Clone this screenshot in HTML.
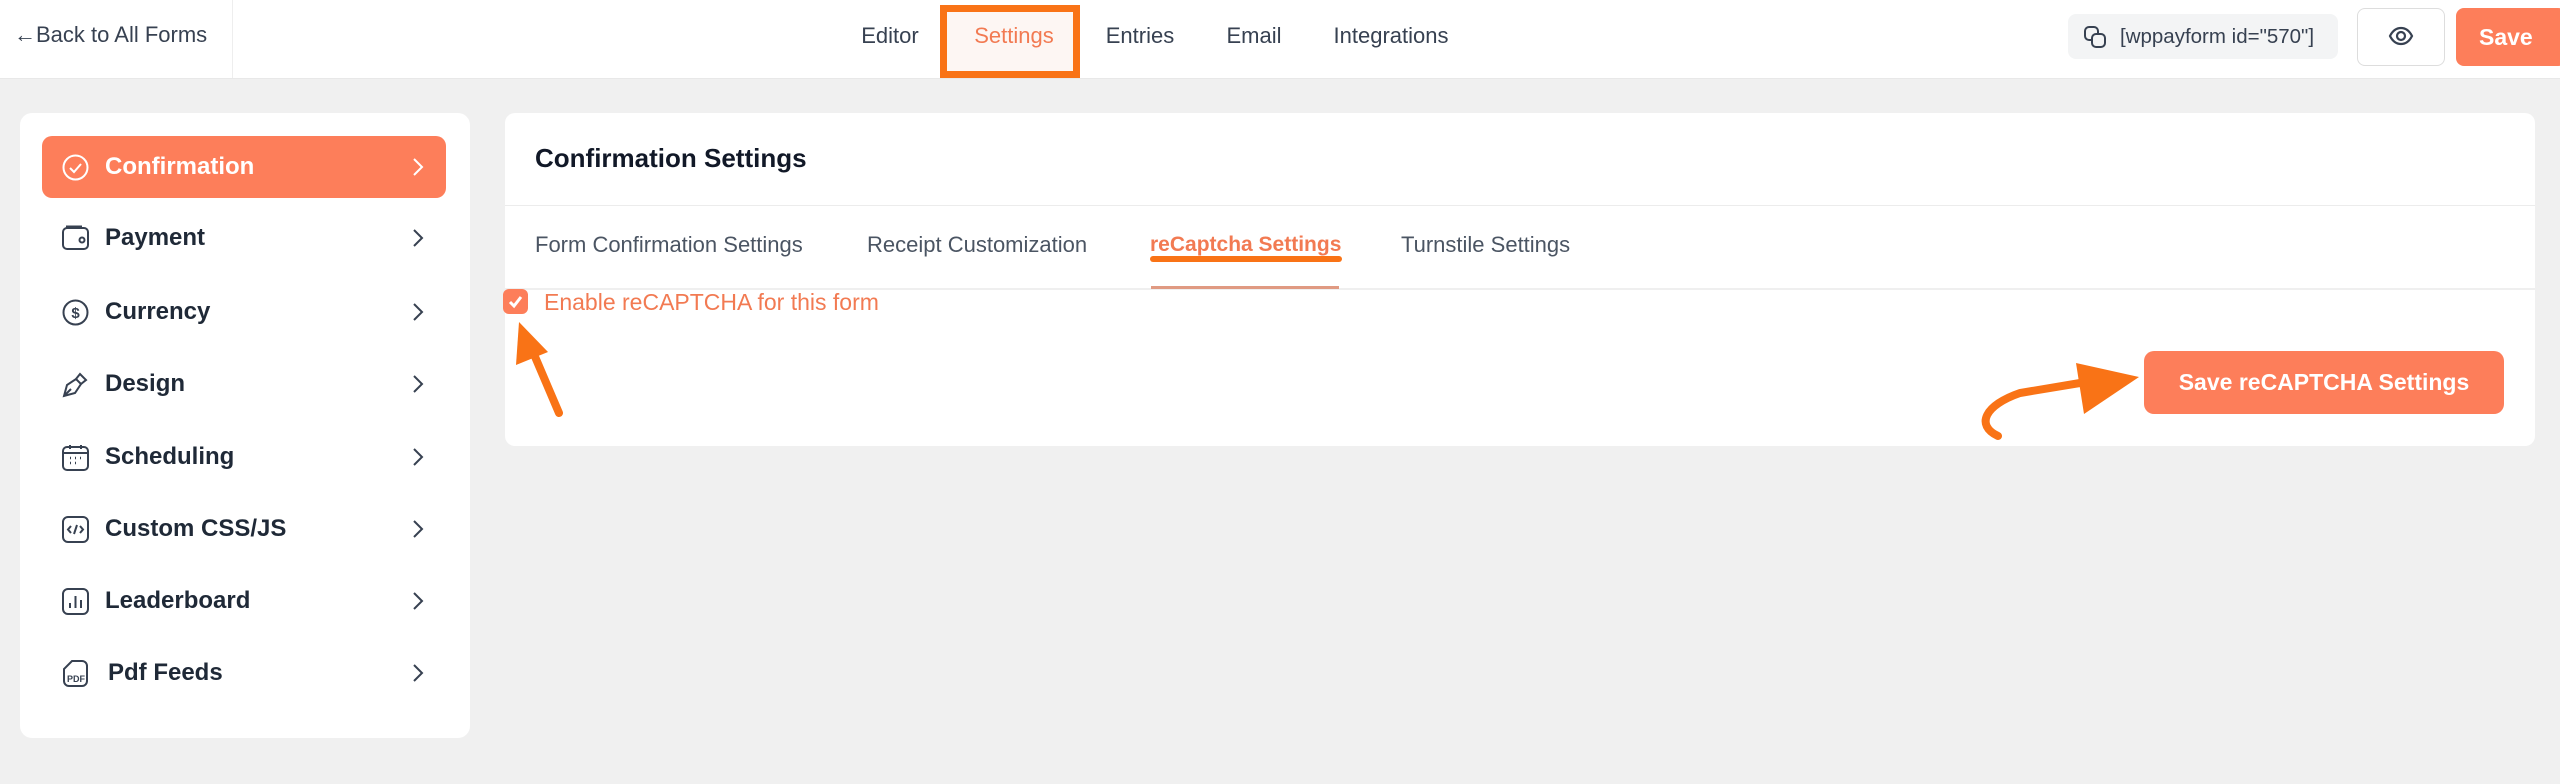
<!DOCTYPE html>
<html><head><meta charset="utf-8"><style>
*{box-sizing:border-box;margin:0;padding:0}
body{width:2560px;height:784px;background:#f0f0f0;font-family:"Liberation Sans",Arial,sans-serif;position:relative;overflow:hidden;color:#1f2937}
.abs{position:absolute}
.hdr{left:0;top:0;width:2560px;height:79px;background:#fff;border-bottom:1px solid #e8e8e8}
.t{position:absolute;font-size:22px;color:#374151;white-space:nowrap;transform:translateX(-50%);top:23px}
.side{left:20px;top:113px;width:450px;height:625px;background:#fff;border-radius:12px}
.item{position:absolute;left:42px;width:404px;height:62px;font-size:24px;font-weight:bold;color:#1f2937}
.item span{position:absolute;left:63px;top:17px}
.item svg.ic{position:absolute;left:20px;top:18px}
.item svg.ch{position:absolute;left:370px;top:21px}
.main{left:505px;top:113px;width:2030px;height:333px;background:#fff;border-radius:10px}
.tab{position:absolute;top:232px;font-size:22px;color:#4b5563;white-space:nowrap}
</style></head><body>
<div class="abs hdr"></div>
<div class="abs" style="left:232px;top:0;width:1px;height:78px;background:#eee"></div>
<div class="abs" style="left:14px;top:22px;font-size:22px;color:#374151">&#8592;Back to All Forms</div>
<div class="t" style="left:890px">Editor</div>
<div class="abs" style="left:940px;top:5px;width:140px;height:73px;border:7px solid #f97316;background:#fdf6f3"></div>
<div class="t" style="left:1014px;color:#f27a52">Settings</div>
<div class="t" style="left:1140px">Entries</div>
<div class="t" style="left:1254px">Email</div>
<div class="t" style="left:1391px">Integrations</div>
<div class="abs" style="left:2068px;top:14px;width:270px;height:45px;background:#f3f4f5;border-radius:8px;font-size:20.5px;color:#374151;padding:11px 0 0 52px;white-space:nowrap">[wppayform id="570"]</div>
<svg class="abs" style="left:2083px;top:25px" width="24" height="24" viewBox="0 0 24 24" fill="none" stroke="#374151" stroke-width="2"><rect x="2" y="2" width="13" height="13" rx="4"/><rect x="9" y="9" width="13" height="13" rx="4" fill="#f3f4f5"/></svg>
<div class="abs" style="left:2357px;top:8px;width:88px;height:58px;border:1px solid #ddd;border-radius:8px;background:#fff"></div>
<svg class="abs" style="left:2388px;top:25px" width="26" height="22" viewBox="0 0 26 22" fill="none" stroke="#374151" stroke-width="2.2"><path d="M2 11C5 5 9 3 13 3s8 2 11 8c-3 6-7 8-11 8S5 17 2 11z"/><circle cx="13" cy="11" r="4"/></svg>
<div class="abs" style="left:2456px;top:8px;width:110px;height:58px;background:#fd7e5a;border-radius:8px;color:#fff;font-weight:bold;font-size:23px;padding:16px 0 0 23px">Save</div>

<div class="abs side"></div>
<div class="item" style="top:136px;background:#fd7e5a;border-radius:10px;color:#fff"><svg class="ic" width="27" height="27" viewBox="0 0 27 27" fill="none" stroke="#fff" stroke-width="2"><circle cx="13.5" cy="13.5" r="12"/><path d="M8 14l4 4 7-8"/></svg><span>Confirmation</span><svg class="ch" width="12" height="20" viewBox="0 0 12 20" fill="none" stroke="#fff" stroke-width="2"><path d="M2 2l8 8-8 8"/></svg></div>
<div class="item" style="top:207px"><svg class="ic" width="27" height="27" viewBox="0 0 27 27" fill="none" stroke="#374151" stroke-width="2"><rect x="1" y="3" width="25" height="21" rx="4"/><path d="M5 3V1.5h14V3"/><circle cx="20" cy="15" r="2.5"/></svg><span>Payment</span><svg class="ch" width="12" height="20" viewBox="0 0 12 20" fill="none" stroke="#374151" stroke-width="2"><path d="M2 2l8 8-8 8"/></svg></div>
<div class="item" style="top:281px"><svg class="ic" width="27" height="27" viewBox="0 0 27 27" fill="none" stroke="#374151" stroke-width="2"><circle cx="13.5" cy="13.5" r="12"/><text x="13.5" y="19" font-size="15" text-anchor="middle" fill="#374151" stroke="none" font-family="Liberation Sans">$</text></svg><span>Currency</span><svg class="ch" width="12" height="20" viewBox="0 0 12 20" fill="none" stroke="#374151" stroke-width="2"><path d="M2 2l8 8-8 8"/></svg></div>
<div class="item" style="top:353px"><svg class="ic" width="27" height="27" viewBox="0 0 27 27" fill="none" stroke="#374151" stroke-width="2"><path d="M2 25l3-11 9-6 5 5-6 9z"/><path d="M14 8l4-5 6 6-5 4"/><path d="M2 25l7-7"/></svg><span>Design</span><svg class="ch" width="12" height="20" viewBox="0 0 12 20" fill="none" stroke="#374151" stroke-width="2"><path d="M2 2l8 8-8 8"/></svg></div>
<div class="item" style="top:426px"><svg class="ic" width="27" height="27" viewBox="0 0 27 27" fill="none" stroke="#374151" stroke-width="2"><rect x="1" y="3" width="25" height="23" rx="4"/><path d="M1 9h25M8 1v4M19 1v4"/><path d="M8 14h1M13 14h1M18 14h1M8 19h1M13 19h1" stroke-width="2.5"/></svg><span>Scheduling</span><svg class="ch" width="12" height="20" viewBox="0 0 12 20" fill="none" stroke="#374151" stroke-width="2"><path d="M2 2l8 8-8 8"/></svg></div>
<div class="item" style="top:498px"><svg class="ic" width="27" height="27" viewBox="0 0 27 27" fill="none" stroke="#374151" stroke-width="2"><rect x="1" y="1" width="25" height="25" rx="5"/><path d="M9 10l-3 3.5 3 3.5M18 10l3 3.5-3 3.5M15 9l-3 9"/></svg><span>Custom CSS/JS</span><svg class="ch" width="12" height="20" viewBox="0 0 12 20" fill="none" stroke="#374151" stroke-width="2"><path d="M2 2l8 8-8 8"/></svg></div>
<div class="item" style="top:570px"><svg class="ic" width="27" height="27" viewBox="0 0 27 27" fill="none" stroke="#374151" stroke-width="2"><rect x="1" y="1" width="25" height="25" rx="5"/><path d="M8 20v-5M13.5 20V8M19 20v-8"/></svg><span>Leaderboard</span><svg class="ch" width="12" height="20" viewBox="0 0 12 20" fill="none" stroke="#374151" stroke-width="2"><path d="M2 2l8 8-8 8"/></svg></div>
<div class="item" style="top:642px"><svg class="ic" width="27" height="27" viewBox="0 0 27 27" fill="none" stroke="#374151" stroke-width="2"><path d="M10 1h10a5 5 0 0 1 5 5v15a5 5 0 0 1-5 5H7a5 5 0 0 1-5-5V9z"/><text x="14" y="22" font-size="9" font-weight="bold" text-anchor="middle" fill="#374151" stroke="none" font-family="Liberation Sans">PDF</text></svg><span style="left:66px">Pdf Feeds</span><svg class="ch" width="12" height="20" viewBox="0 0 12 20" fill="none" stroke="#374151" stroke-width="2"><path d="M2 2l8 8-8 8"/></svg></div>

<div class="abs main"></div>
<div class="abs" style="left:535px;top:143px;font-size:26px;font-weight:bold;color:#111827">Confirmation Settings</div>
<div class="abs" style="left:505px;top:205px;width:2030px;height:1px;background:#ececec"></div>
<div class="tab" style="left:535px">Form Confirmation Settings</div>
<div class="tab" style="left:867px">Receipt Customization</div>
<div class="tab" style="left:1150px;color:#f27a52;font-weight:bold;font-size:21px;top:233px">reCaptcha Settings</div>
<div class="tab" style="left:1401px">Turnstile Settings</div>
<div class="abs" style="left:1150px;top:256px;width:192px;height:6px;background:#f97316;border-radius:3px"></div>
<div class="abs" style="left:505px;top:288px;width:2030px;height:2px;background:#efefef"></div>
<div class="abs" style="left:1151px;top:286px;width:188px;height:3px;background:#e09a82"></div>
<div class="abs" style="left:503px;top:289px;width:25px;height:25px;background:#fd7e5a;border-radius:6px"></div>
<svg class="abs" style="left:503px;top:289px" width="25" height="25" viewBox="0 0 25 25" fill="none" stroke="#fff" stroke-width="3"><path d="M7 13l4 4 7-9"/></svg>
<div class="abs" style="left:544px;top:289px;font-size:23px;color:#f27a52">Enable reCAPTCHA for this form</div>
<div class="abs" style="left:2144px;top:351px;width:360px;height:63px;background:#fd7e5a;border-radius:10px;color:#fff;font-weight:bold;font-size:23px;text-align:center;line-height:63px">Save reCAPTCHA Settings</div>

<svg class="abs" style="left:0;top:0" width="2560" height="784" viewBox="0 0 2560 784">
<path d="M1998 436C1975 425 1985 405 2020 393L2086 382" fill="none" stroke="#f97316" stroke-width="8" stroke-linecap="round"/>
<polygon points="2139,377 2076,363 2084,414" fill="#f97316"/>
<path d="M559 413L533 352" fill="none" stroke="#f97316" stroke-width="8" stroke-linecap="round"/>
<polygon points="519,322 516,365 548,352" fill="#f97316"/>
</svg>
</body></html>
